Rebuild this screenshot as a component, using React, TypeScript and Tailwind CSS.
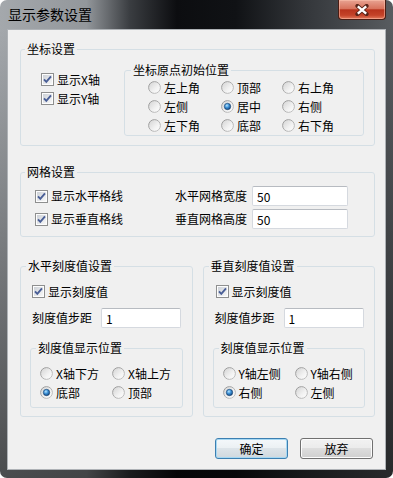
import type { ReactNode } from "react"

function Defs() {
    return (
        <svg className="absolute w-0 h-0" aria-hidden="true">
            <defs>
                <linearGradient id="cbFill" x1="0" y1="0" x2="1" y2="1">
                    <stop offset="0" stopColor="#cdd1d7" />
                    <stop offset="1" stopColor="#f8f8f8" />
                </linearGradient>
                <linearGradient id="rbFill" x1="0" y1="0" x2="1" y2="1">
                    <stop offset="0" stopColor="#d2d2d2" />
                    <stop offset="0.6" stopColor="#f2f2f2" />
                    <stop offset="1" stopColor="#ffffff" />
                </linearGradient>
                <linearGradient id="rbStroke" x1="0" y1="0" x2="1" y2="1">
                    <stop offset="0" stopColor="#959595" />
                    <stop offset="1" stopColor="#c6c6c6" />
                </linearGradient>
                <radialGradient id="rbDot" cx="0.4" cy="0.35" r="0.7">
                    <stop offset="0" stopColor="#b8e6ff" />
                    <stop offset="0.45" stopColor="#3f93d8" />
                    <stop offset="1" stopColor="#0d3f78" />
                </radialGradient>
            </defs>
        </svg>
    )
}

function CheckBox({ children }: { children: ReactNode }) {
    return (
        <label className="flex items-center gap-[3px] h-[19px]">
            <svg width="13" height="13" viewBox="0 0 13 13" className="shrink-0">
                <rect x="0.5" y="0.5" width="12" height="12" fill="#fdfdfd" stroke="#8e8f8f" />
                <rect x="2" y="2" width="9" height="9" fill="url(#cbFill)" />
                <path d="M3 6.3 L5.3 8.8 L10 3.3" fill="none" stroke="#4a5f97" strokeWidth="1.9" />
            </svg>
            <span>{children}</span>
        </label>
    )
}

function Radio({ checked, children }: { checked?: boolean; children: ReactNode }) {
    return (
        <label className="flex items-center gap-[3px] h-[19px]">
            <svg width="13" height="13" viewBox="0 0 13 13" className="shrink-0">
                <circle cx="6.5" cy="6.5" r="5.9" fill="url(#rbFill)" stroke="url(#rbStroke)" strokeWidth="1" />
                {checked && (
                    <circle cx="6.5" cy="6.5" r="3.2" fill="url(#rbDot)" stroke="#163e6b" strokeWidth="0.6" />
                )}
            </svg>
            <span>{children}</span>
        </label>
    )
}

function TextBox({ value, className }: { value: string; className: string }) {
    return (
        <input
            readOnly
            value={value}
            className={`h-[20px] border border-[#d5d9df] border-t-[#b7bbc1] rounded-[2px] bg-white pl-[4px] text-[12px] text-black outline-none ${className}`}
        />
    )
}

function StepSettings({ checkPad, radios }: { checkPad: string; radios: [string, boolean][] }) {
    return (
        <div className="flex flex-col pt-[9px] pb-[8px]">
            <div className={checkPad}>
                <CheckBox>显示刻度值</CheckBox>
            </div>
            <div className="flex items-center mt-[7px] pl-[11px] h-[20px]">
                <span className="w-[60px]">刻度值步距</span>
                <TextBox value="1" className="ml-[9px] w-[80px]" />
            </div>
            <fieldset className="mt-[13px] mx-[9px] min-w-0 border border-[#d5dfe5] rounded-[3px]">
                <legend className="ml-[5px] px-[2px] leading-[14px]">刻度值显示位置</legend>
                <div className="grid grid-cols-[72px_1fr] pl-[9px] pt-[9px] pb-[5px]">
                    {radios.map(([label, on]) => (
                        <Radio key={label} checked={on}>
                            {label}
                        </Radio>
                    ))}
                </div>
            </fieldset>
        </div>
    )
}

export default function App() {
    return (
        <div className="w-[393px] h-[478px] bg-white font-['Noto_Sans_CJK_SC','Noto_Sans',sans-serif] text-black">
            <Defs />
            <div className="flex flex-col w-[393px] h-[478px] rounded-[7px] overflow-hidden bg-[linear-gradient(180deg,rgba(0,0,0,0)_0%,rgba(0,0,0,0)_6%,rgba(0,0,0,0.55)_100%),linear-gradient(90deg,#a4a8ac_0%,#93979b_22%,#3a3d41_33%,#0c0d10_45%,#101215_60%,#34373b_78%,#585c60_100%)]">
                <div className="h-[29px] flex items-start">
                    <div className="pl-[8px] pt-[4px] text-[14px] leading-[20px] text-black">
                        显示参数设置
                    </div>
                    <div className="ml-auto mr-[7px] w-[48px] h-[20px] flex items-center justify-center rounded-b-[4px] border border-t-0 border-[#4a1d14] bg-[linear-gradient(180deg,#e8a392_0%,#d8735d_45%,#b8341d_52%,#c44329_80%,#e27a5c_100%)] shadow-[inset_0_0_0_1px_rgba(255,200,180,0.5)]">
                        <svg width="16" height="12" viewBox="0 0 16 12">
                            <path d="M3.5 2 L12.5 10 M12.5 2 L3.5 10" stroke="#5a2418" strokeWidth="4.2" strokeLinecap="round" />
                            <path d="M3.8 2.3 L12.2 9.7 M12.2 2.3 L3.8 9.7" stroke="#ffffff" strokeWidth="2.4" />
                        </svg>
                    </div>
                </div>
                <div className="flex-1 flex px-[7px] pb-[8px]">
                    <div className="flex-1 flex flex-col border border-[#aeb2b6] bg-[#f0f0f0] pl-[12px] pr-[10px] text-[12px] leading-[14px]">
                        <fieldset className="mt-[12px] min-w-0 border border-[#d5dfe5] rounded-[3px]">
                            <legend className="ml-[4px] px-[2px] leading-[14px]">坐标设置</legend>
                            <div className="flex pl-[20px] pr-[10px] pb-[9px]">
                                <div className="flex flex-col pt-[14px]">
                                    <CheckBox>显示X轴</CheckBox>
                                    <CheckBox>显示Y轴</CheckBox>
                                </div>
                                <fieldset className="ml-auto mt-[7px] w-[240px] min-w-0 border border-[#d5dfe5] rounded-[3px]">
                                    <legend className="ml-[6px] px-[2px] leading-[14px]">坐标原点初始位置</legend>
                                    <div className="grid grid-cols-[73px_61px_1fr] pl-[23px] pt-[1px]">
                                        <Radio>左上角</Radio>
                                        <Radio>顶部</Radio>
                                        <Radio>右上角</Radio>
                                        <Radio>左侧</Radio>
                                        <Radio checked>居中</Radio>
                                        <Radio>右侧</Radio>
                                        <Radio>左下角</Radio>
                                        <Radio>底部</Radio>
                                        <Radio>右下角</Radio>
                                    </div>
                                </fieldset>
                            </div>
                        </fieldset>

                        <fieldset className="mt-[19px] min-w-0 border border-[#d5dfe5] rounded-[3px]">
                            <legend className="ml-[4px] px-[2px] leading-[14px]">网格设置</legend>
                            <div className="flex flex-col gap-[3px] pt-[7px] pb-[7px] pl-[14px]">
                                <div className="flex items-center h-[20px]">
                                    <div className="w-[140px]">
                                        <CheckBox>显示水平格线</CheckBox>
                                    </div>
                                    <span className="w-[72px]">水平网格宽度</span>
                                    <TextBox value="50" className="ml-[5px] w-[96px]" />
                                </div>
                                <div className="flex items-center h-[20px]">
                                    <div className="w-[140px]">
                                        <CheckBox>显示垂直格线</CheckBox>
                                    </div>
                                    <span className="w-[72px]">垂直网格高度</span>
                                    <TextBox value="50" className="ml-[5px] w-[96px]" />
                                </div>
                            </div>
                        </fieldset>

                        <div className="flex gap-[10px] mt-[22px]">
                            <fieldset className="flex-1 min-w-0 border border-[#d5dfe5] rounded-[3px]">
                                <legend className="ml-[5px] px-[2px] leading-[14px]">水平刻度值设置</legend>
                                <StepSettings
                                    checkPad="pl-[11px]"
                                    radios={[
                                        ["X轴下方", false],
                                        ["X轴上方", false],
                                        ["底部", true],
                                        ["顶部", false],
                                    ]}
                                />
                            </fieldset>
                            <fieldset className="flex-1 min-w-0 border border-[#d5dfe5] rounded-[3px]">
                                <legend className="ml-[5px] px-[2px] leading-[14px]">垂直刻度值设置</legend>
                                <StepSettings
                                    checkPad="pl-[12px]"
                                    radios={[
                                        ["Y轴左侧", false],
                                        ["Y轴右侧", false],
                                        ["右侧", true],
                                        ["左侧", false],
                                    ]}
                                />
                            </fieldset>
                        </div>

                        <div className="flex justify-end gap-[12px] mt-[21px] mr-[2px]">
                            <button className="w-[73px] h-[21px] rounded-[3px] border border-[#3c7fb1] bg-[linear-gradient(180deg,#f4f8fb_0%,#ebf0f3_50%,#dde4e9_50%,#d0d8de_100%)] shadow-[inset_0_0_0_1px_#a6d8f3] text-[12px] leading-[14px]">
                                确定
                            </button>
                            <button className="w-[73px] h-[21px] rounded-[3px] border border-[#707070] bg-[linear-gradient(180deg,#f2f2f2_0%,#ebebeb_50%,#dddddd_50%,#cfcfcf_100%)] shadow-[inset_0_0_0_1px_#fcfcfc] text-[12px] leading-[14px]">
                                放弃
                            </button>
                        </div>
                    </div>
                </div>
            </div>
        </div>
    )
}
